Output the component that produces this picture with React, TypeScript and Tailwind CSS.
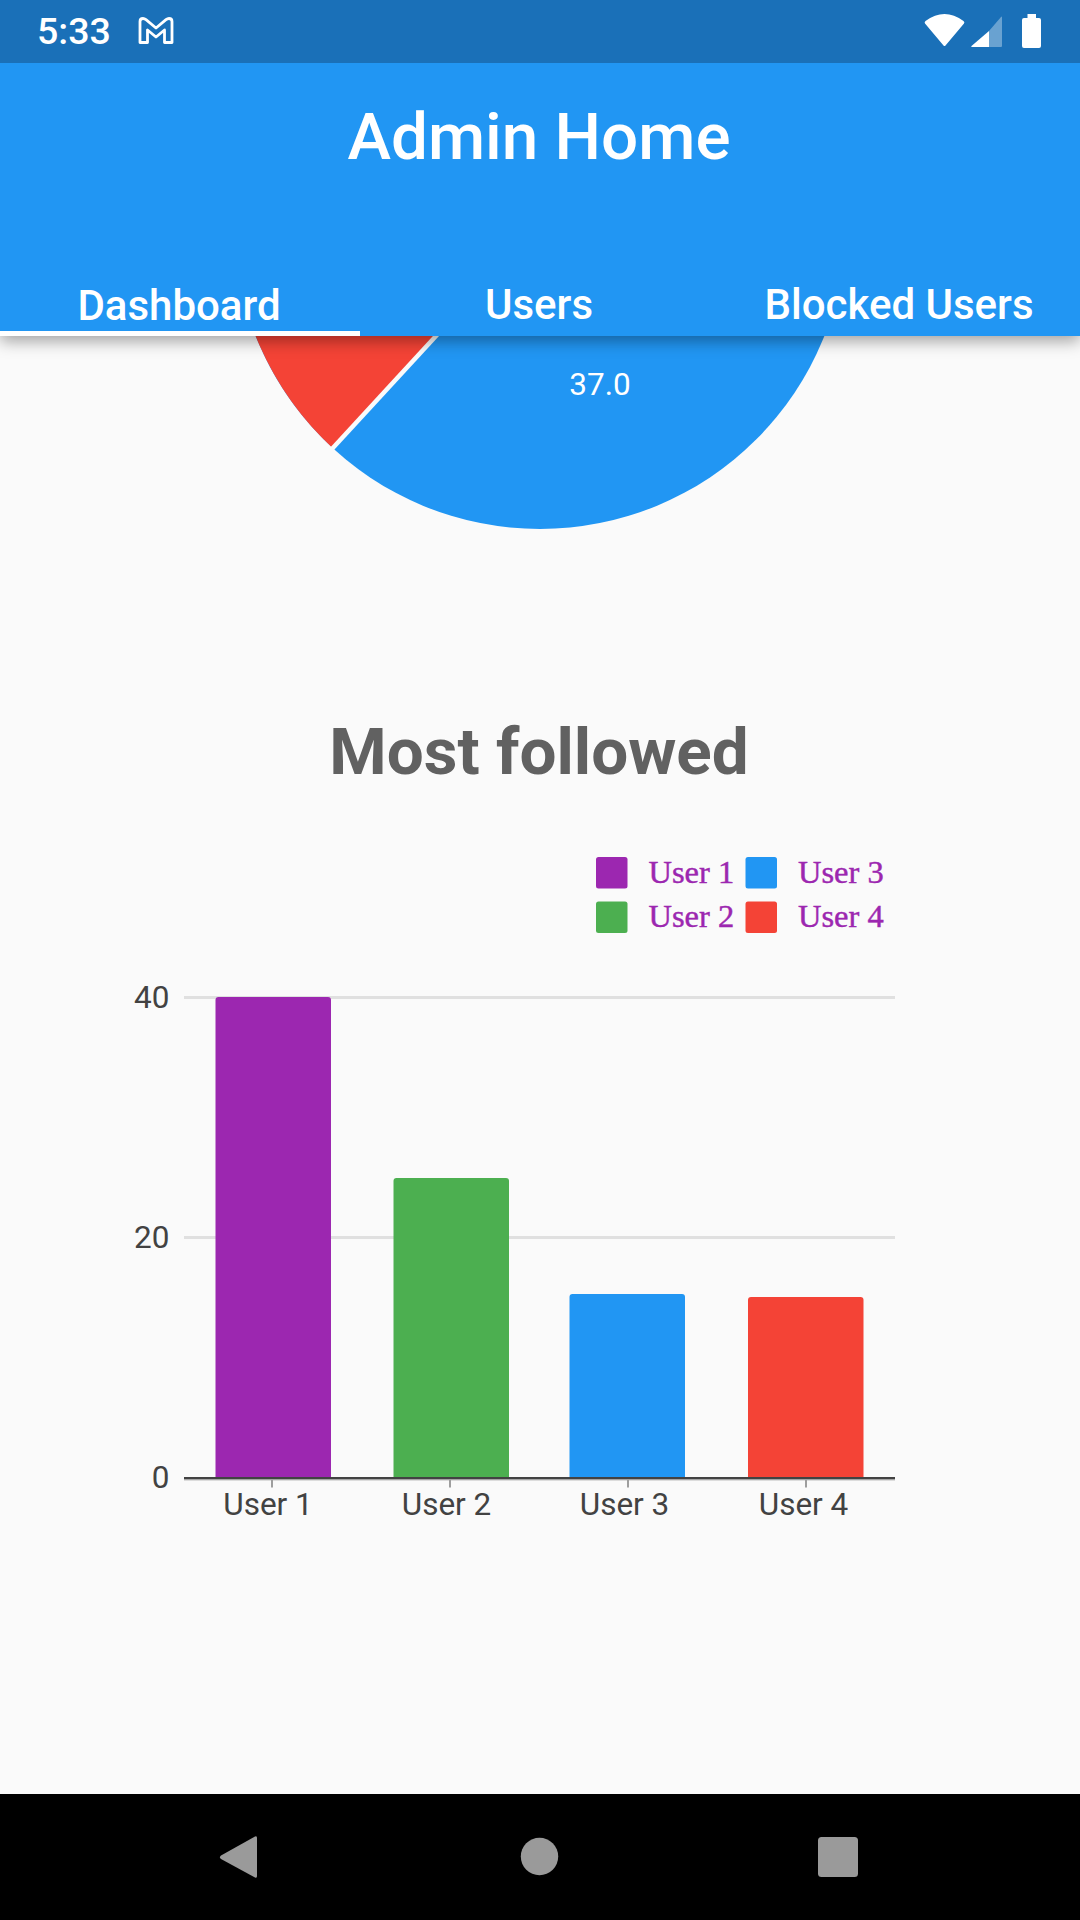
import React from "react";

const bars = [
  { x: 215.5, w: 115.5, top: 997, color: "#9C27B0" },
  { x: 393.5, w: 115.5, top: 1178, color: "#4CAF50" },
  { x: 569.5, w: 115.5, top: 1294, color: "#2196F3" },
  { x: 748, w: 115.5, top: 1297, color: "#F44336" },
];
const base = 1478;
const ticks = [
  { x: 272, label: "User 1", lx: 268 },
  { x: 450, label: "User 2", lx: 446.5 },
  { x: 628, label: "User 3", lx: 624.5 },
  { x: 806, label: "User 4", lx: 803.5 },
];
const legend = [
  { x: 596, y: 857, color: "#9C27B0", label: "User 1" },
  { x: 596, y: 901.5, color: "#4CAF50", label: "User 2" },
  { x: 745.5, y: 857, color: "#2196F3", label: "User 3" },
  { x: 745.5, y: 901.5, color: "#F44336", label: "User 4" },
];

function StatusIcons() {
  return (
    <svg width="170" height="63" viewBox="910 0 170 63" className="block">
      <path d="M925 23.5 Q924 22 925.5 21 Q944.5 7 963.5 21 Q965 22 964 23.5 L945.5 45.5 Q944.5 46.5 943.5 45.5 Z" fill="#fff" />
      <path d="M989 31 L1001 17 Q1002 16 1002 17.5 L1002 46 Q1002 47 1001 47 L989 47 Z" fill="#fff" fillOpacity="0.35" />
      <path d="M989 31 L989 47 L972 47 Q970.5 47 971.5 46 Z" fill="#fff" />
      <path d="M1027.5 14 H1036 V18 H1039 Q1041 18 1041 20 V46 Q1041 48 1039 48 H1024 Q1022 48 1022 46 V20 Q1022 18 1024 18 H1027.5 Z" fill="#fff" />
    </svg>
  );
}

function GmailIcon() {
  return (
    <svg width="38" height="30" viewBox="138 16 38 30" className="block">
      <path
        d="M141 42.5 V21.5 Q141 18.5 144 18.5 Q145.5 18.5 147 19.7 L157 28 L167 19.7 Q168.5 18.5 170 18.5 Q173 18.5 173 21.5 V42.5 H165.5 V30 L157 37 L148.5 30 V42.5 Z"
        fill="none"
        stroke="#fff"
        strokeWidth="2.8"
        strokeLinejoin="round"
      />
    </svg>
  );
}

function Pie() {
  return (
    <div className="relative h-[200px]">
      <svg width="1080" height="200" viewBox="0 336 1080 200" className="block">
        <circle cx="540" cy="223" r="306" fill="#2196F3" />
        <path d="M540 223 L333 448.4 A306 306 0 0 1 234 223 Z" fill="#F44336" />
        <line x1="540" y1="223" x2="331" y2="450" stroke="#FAFAFA" strokeWidth="4.5" />
        <text x="600" y="395" textAnchor="middle" className="fill-white text-[31.5px]">37.0</text>
      </svg>
    </div>
  );
}

function BarChart() {
  return (
    <svg width="1080" height="700" viewBox="0 840 1080 700" className="block">
      {legend.map((l) => (
        <g key={l.label}>
          <rect x={l.x} y={l.y} width="31.5" height="31.5" rx="2.5" fill={l.color} />
          <text
            x={l.x + 52.5}
            y={l.y + 25.5}
            className="fill-[#9C27B0] stroke-[#9C27B0] stroke-[0.45px] text-[32.5px] [font-family:'Liberation_Serif',serif]"
          >
            {l.label}
          </text>
        </g>
      ))}
      <rect x="184" y="996" width="711" height="3" fill="#E0E0E0" />
      <rect x="184" y="1236" width="711" height="3" fill="#E0E0E0" />
      {bars.map((b) => (
        <path
          key={b.x}
          d={`M${b.x} ${base} V${b.top + 3} Q${b.x} ${b.top} ${b.x + 3} ${b.top} H${b.x + b.w - 3} Q${b.x + b.w} ${b.top} ${b.x + b.w} ${b.top + 3} V${base} Z`}
          fill={b.color}
        />
      ))}
      <rect x="184" y="1477" width="711" height="2.6" fill="#424242" />
      <rect x="184" y="1479.5" width="711" height="1" fill="#BDBDBD" />
      {ticks.map((t) => (
        <g key={t.x}>
          <rect x={t.x - 1} y="1480" width="2" height="7.5" fill="#9E9E9E" />
          <text x={t.lx} y="1515" textAnchor="middle" className="fill-[#424242] text-[31.5px]">{t.label}</text>
        </g>
      ))}
      <text x="169.5" y="1008" textAnchor="end" className="fill-[#424242] text-[31.5px]">40</text>
      <text x="169.5" y="1248" textAnchor="end" className="fill-[#424242] text-[31.5px]">20</text>
      <text x="169.5" y="1488" textAnchor="end" className="fill-[#424242] text-[31.5px]">0</text>
    </svg>
  );
}

function NavBar() {
  return (
    <div className="h-[126px] bg-black flex items-center shrink-0">
      <svg width="1080" height="126" viewBox="0 1794 1080 126" className="block">
        <path d="M255 1836.5 Q257 1835.5 257 1838 V1876 Q257 1878.5 255 1877.5 L221 1859 Q219 1857 221 1855.5 Z" fill="#9A9A9A" />
        <circle cx="539.5" cy="1856.5" r="18.7" fill="#9A9A9A" />
        <rect x="818" y="1837" width="40" height="40" rx="3.5" fill="#9A9A9A" />
      </svg>
    </div>
  );
}

export default function App() {
  return (
    <div className="w-[1080px] h-[1920px] flex flex-col overflow-hidden bg-[#FAFAFA] [font-family:Roboto,sans-serif]">
      <div className="h-[63px] bg-[#1A70B8] flex items-center justify-between shrink-0 relative z-20">
        <div className="flex items-center">
          <span className="ml-[37px] text-white text-[37.5px] font-medium leading-[67px]">5:33</span>
          <div className="ml-[26.5px] -mt-[1px]">
            <GmailIcon />
          </div>
        </div>
        <StatusIcons />
      </div>

      <div className="h-[273px] bg-[#2196F3] shrink-0 relative z-10 flex flex-col shadow-[0_5px_15px_rgba(0,0,0,0.36)]">
        <div className="h-[147px] flex items-center justify-center pr-[2px]">
          <h1 className="text-white text-[65.6px] font-medium leading-none">Admin Home</h1>
        </div>
        <div className="mt-auto flex h-[56px]">
          <div className="w-[360px] flex items-center justify-center border-b-[5.5px] border-white pr-[2px]">
            <span className="text-white text-[42px] font-medium leading-none">Dashboard</span>
          </div>
          <div className="w-[360px] flex items-center justify-center pb-[5.5px] pr-[2px]">
            <span className="text-white text-[42px] font-medium leading-none">Users</span>
          </div>
          <div className="w-[360px] flex items-center justify-center pb-[5.5px] pr-[2px]">
            <span className="text-white text-[42px] font-medium leading-none">Blocked Users</span>
          </div>
        </div>
      </div>

      <main className="flex-1 overflow-hidden flex flex-col">
        <Pie />
        <h2 className="mt-[179px] pr-[2px] text-center text-[#616161] text-[65.6px] font-bold leading-[74px]">Most followed</h2>
        <div className="mt-[51px]">
          <BarChart />
        </div>
      </main>

      <NavBar />
    </div>
  );
}
